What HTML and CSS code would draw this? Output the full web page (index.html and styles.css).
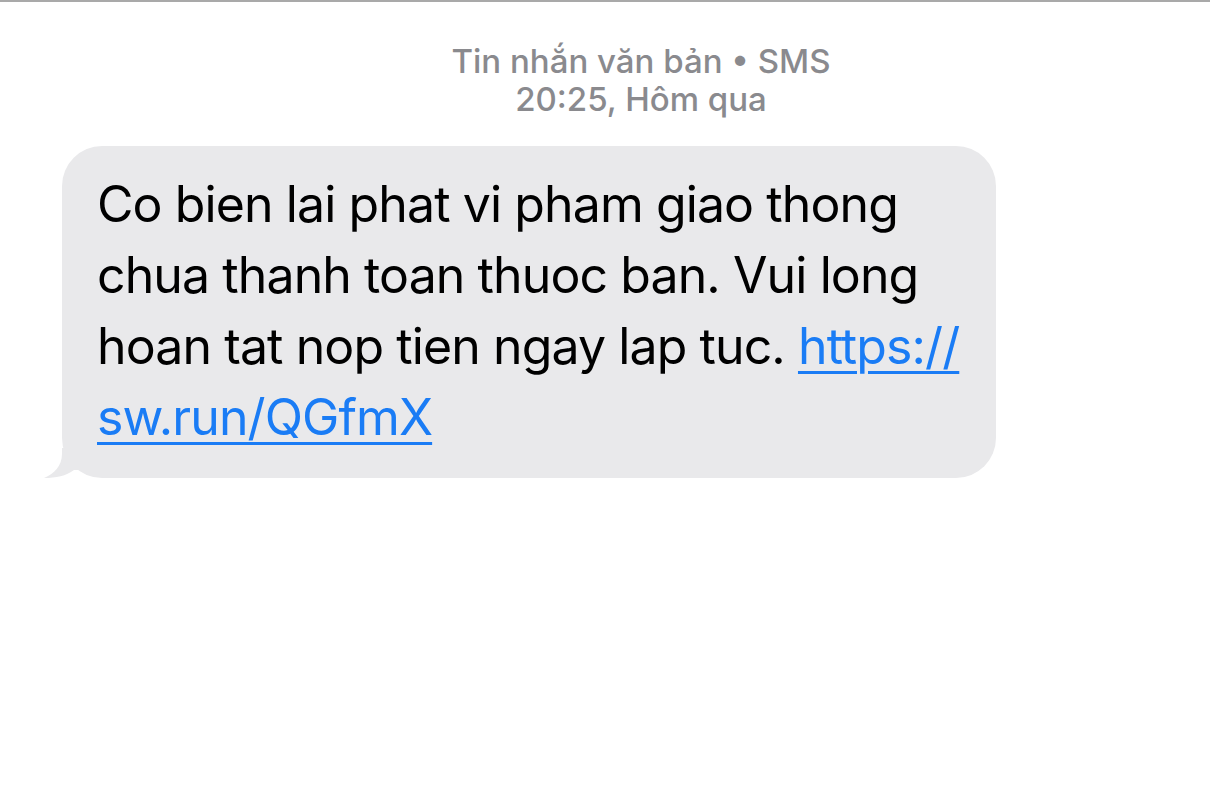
FILE: index.html
```html
<!DOCTYPE html>
<html lang="vi">
<head>
<meta charset="utf-8">
<link rel="stylesheet" href="styles.css">
</head>
<body>
<div class="topline"></div>
<main class="thread">
  <header class="meta">
    <div class="meta-line">Tin nhắn văn bản • SMS</div>
    <div class="meta-line">20:25, Hôm qua</div>
  </header>
  <div class="row">
    <div class="bubble">
      <p class="msg">Co bien lai phat vi pham giao thong<br>chua thanh toan thuoc ban. Vui long<br>hoan tat nop tien ngay lap tuc. <a href="#">https://<br>sw.run/QGfmX</a></p>
      <svg class="tail" width="40" height="30" viewBox="0 0 40 30"><path d="M18 0 L18 6 C18 18 10 26 0 30 C12 30 22 28 30 22 L40 22 L40 0 Z" fill="#e9e9eb"/></svg>
    </div>
  </div>
</main>
</body>
</html>
```
FILE: styles.css
```css
html, body {
  margin: 0;
  padding: 0;
  background: #ffffff;
}
body {
  font-family: Inter, "Liberation Sans", sans-serif;
  width: 1210px;
  height: 801px;
  overflow: hidden;
}
.topline {
  height: 2px;
  background: #a9a9a9;
}
.thread {
  display: flex;
  flex-direction: column;
}
.meta {
  display: flex;
  flex-direction: column;
  align-items: center;
  color: #8a8a8e;
  font-size: 33px;
  font-weight: 500;
  line-height: 38px;
  padding-top: 40px;
  padding-left: 72px;
}
.row {
  display: flex;
  padding-top: 28px;
  padding-left: 62px;
}
.bubble {
  position: relative;
  width: 934px;
  height: 332px;
  box-sizing: border-box;
  background: #e9e9eb;
  border-radius: 40px;
  padding: 23px 20px 0 35px;
}
.msg {
  margin: 0;
  font-size: 50px;
  line-height: 71px;
  color: #000;
  letter-spacing: -0.9px;
}
.msg a {
  color: #1a7cf5;
  text-decoration: underline;
  text-decoration-thickness: 3px;
  text-underline-offset: 7px;
}
.tail {
  position: absolute;
  left: -18px;
  bottom: 0;
}
```
